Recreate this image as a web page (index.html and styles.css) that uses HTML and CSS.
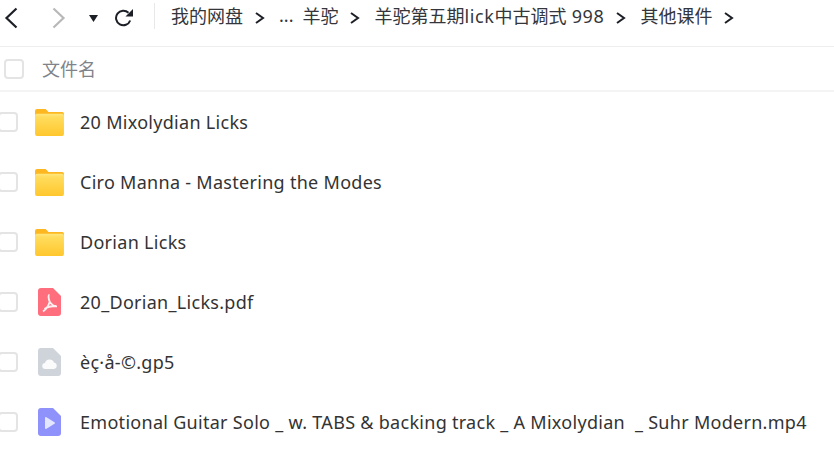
FILE: index.html
```html
<!DOCTYPE html>
<html lang="zh-CN">
<head>
    <meta charset="UTF-8">
    <title>其他课件</title>
    <link rel="stylesheet" href="styles.css">
</head>
<body>
    <div class="toolbar">
        <svg class="nav-back" width="14" height="22" viewBox="0 0 14 22"><path d="M12.500 1.500 2.500 11l10 9.500" fill="none" stroke="#1c1f26" stroke-width="2.200"/></svg>
        <svg class="nav-next" width="14" height="22" viewBox="0 0 14 22"><path d="M1.500 1.500 11.500 11l-10 9.500" fill="none" stroke="#b8b8b8" stroke-width="2.200"/></svg>
        <svg class="nav-drop" width="9" height="7" viewBox="0 0 9 7"><path d="M0 0h9L4.500 7z" fill="#1c1f26"/></svg>
        <svg class="nav-refresh" width="19" height="18" viewBox="0 0 19 18"><path d="M15.200 11.500A7.300 7.300 0 1 1 13.500 3.800" fill="none" stroke="#1c1f26" stroke-width="2"/><path d="M18 0v7.500h-7.500z" fill="#1c1f26"/></svg>
        <div class="divider"></div>
        <div class="crumbs">
            <span class="crumb">我的网盘</span><svg class="sep" width="10" height="12" viewBox="0 0 10 12"><path d="M1 1l7 5-7 5" fill="none" stroke="#1c1f26" stroke-width="2"/></svg>
            <span class="crumb dots">...</span>
            <span class="crumb">羊驼</span><svg class="sep" width="10" height="12" viewBox="0 0 10 12"><path d="M1 1l7 5-7 5" fill="none" stroke="#1c1f26" stroke-width="2"/></svg>
            <span class="crumb">羊驼第五期<span class="latin">lick</span>中古调式<span class="latin"> 998</span></span><svg class="sep" width="10" height="12" viewBox="0 0 10 12"><path d="M1 1l7 5-7 5" fill="none" stroke="#1c1f26" stroke-width="2"/></svg>
            <span class="crumb">其他课件</span><svg class="sep" width="10" height="12" viewBox="0 0 10 12"><path d="M1 1l7 5-7 5" fill="none" stroke="#1c1f26" stroke-width="2"/></svg>
        </div>
    </div>

    <div class="list-head">
        <span class="check"></span>
        <span class="head-name">文件名</span>
    </div>

    <div class="row">
        <span class="check"></span>
        <svg class="icon" width="29" height="27" viewBox="0 0 30 28">
            <defs>
                <linearGradient id="folderBody" x1="0" y1="0" x2="0" y2="1">
                    <stop offset="0" stop-color="#ffe680"/>
                    <stop offset="0.15" stop-color="#ffdc5c"/>
                    <stop offset="1" stop-color="#ffc72e"/>
                </linearGradient>
            </defs>
            <path d="M2 0h9l3 3h14a2 2 0 0 1 2 2v4H0V2a2 2 0 0 1 2-2z" fill="#fdb721"/>
            <path d="M2 5h26a2 2 0 0 1 2 2v19a2 2 0 0 1-2 2H2a2 2 0 0 1-2-2V7a2 2 0 0 1 2-2z" fill="url(#folderBody)"/>
        </svg>
        <span class="name">20 Mixolydian Licks</span>
    </div>
    <div class="row">
        <span class="check"></span>
        <svg class="icon" width="29" height="27" viewBox="0 0 30 28"><path d="M2 0h9l3 3h14a2 2 0 0 1 2 2v4H0V2a2 2 0 0 1 2-2z" fill="#fdb721"/><path d="M2 5h26a2 2 0 0 1 2 2v19a2 2 0 0 1-2 2H2a2 2 0 0 1-2-2V7a2 2 0 0 1 2-2z" fill="url(#folderBody)"/></svg>
        <span class="name">Ciro Manna - Mastering the Modes</span>
    </div>
    <div class="row">
        <span class="check"></span>
        <svg class="icon" width="29" height="27" viewBox="0 0 30 28"><path d="M2 0h9l3 3h14a2 2 0 0 1 2 2v4H0V2a2 2 0 0 1 2-2z" fill="#fdb721"/><path d="M2 5h26a2 2 0 0 1 2 2v19a2 2 0 0 1-2 2H2a2 2 0 0 1-2-2V7a2 2 0 0 1 2-2z" fill="url(#folderBody)"/></svg>
        <span class="name">Dorian Licks</span>
    </div>
    <div class="row">
        <span class="check"></span>
        <svg class="icon file" width="23" height="28" viewBox="0 0 23 28">
            <path d="M3 0h12l8 8v17a3 3 0 0 1-3 3H3a3 3 0 0 1-3-3V3a3 3 0 0 1 3-3z" fill="#ff6e7c"/>
            <path d="M11.500 7C10 7 10.500 11 11.700 13.700 10.500 17.500 8 21.500 5 23.500M11.700 13.700C13.500 16.500 16.500 18.300 19 18.300M6.500 21C9 19 14 18 18 18" fill="none" stroke="#fff" stroke-width="1.800" stroke-opacity="0.9"/>
        </svg>
        <span class="name">20_Dorian_Licks.pdf</span>
    </div>
    <div class="row">
        <span class="check"></span>
        <svg class="icon file" width="23" height="28" viewBox="0 0 23 28"><path d="M3 0h12l8 8v17a3 3 0 0 1-3 3H3a3 3 0 0 1-3-3V3a3 3 0 0 1 3-3z" fill="#cfd3da"/><path d="M7.500 21a3 3 0 0 1-.5-6 4.700 4.700 0 0 1 9-.5 3.300 3.300 0 0 1 0 6.500z" fill="#fff" fill-opacity="0.9"/></svg>
        <span class="name">èç·å-©.gp5</span>
    </div>
    <div class="row">
        <span class="check"></span>
        <svg class="icon file" width="23" height="28" viewBox="0 0 23 28"><path d="M3 0h12l8 8v17a3 3 0 0 1-3 3H3a3 3 0 0 1-3-3V3a3 3 0 0 1 3-3z" fill="#8f92fb"/><path d="M7 10a1 1 0 0 1 1.500-.8l8 5a1 1 0 0 1 0 1.600l-8 5a1 1 0 0 1-1.500-.8z" fill="#e4e5ff"/></svg>
        <span class="name">Emotional Guitar Solo _ w. TABS &amp; backing track _ A Mixolydian&nbsp; _ Suhr Modern.mp4</span>
    </div>
</body>
</html>
```

FILE: styles.css
```css
html, body {
    margin: 0;
    padding: 0;
    overflow: hidden;
}

body {
    font-family: "Noto Sans", "Noto Sans CJK SC", sans-serif;
    background-color: #ffffff;
    color: #333333;
}

/* top bar */
.toolbar {
    display: flex;
    align-items: center;
    height: 26px;
    padding: 3px 0 17px;
    border-bottom: 1px solid #eeeeee;
}

.toolbar svg {
    flex: none;
    margin-top: 4px;
}

.toolbar .nav-back {
    margin-left: 4px;
}

.toolbar .nav-next {
    margin-left: 34px;
}

.toolbar .nav-drop {
    margin-left: 23px;
}

.toolbar .nav-refresh {
    margin-left: 17px;
}

.divider {
    width: 1px;
    height: 26px;
    margin-left: 20px;
    background: #e8e8e8;
}

.crumbs {
    display: flex;
    align-items: center;
    margin-left: 16px;
    font-size: 18px;
    white-space: nowrap;
}

.crumb {
    margin-bottom: 3px;
    color: #34363b;
    white-space: pre;
}

.latin {
    letter-spacing: 0.6px;
}

.dots {
    margin-right: 9px;
}

.toolbar .sep {
    margin-left: 12px;
    margin-right: 14px;
}

/* list */
.list-head {
    display: flex;
    align-items: center;
    height: 43px;
    border-bottom: 2px solid #f4f4f4;
    padding-left: 4px;
}

.head-name {
    margin-left: 18px;
    margin-bottom: 2px;
    font-size: 18px;
    color: #80838a;
}

.check {
    flex: none;
    width: 16px;
    height: 16px;
    border: 2px solid #e4e4e4;
    border-radius: 4px;
}

.row {
    display: flex;
    align-items: center;
    height: 60px;
    margin-left: -2px;
}

.icon {
    flex: none;
    margin-left: 17px;
}

.icon.file {
    margin-left: 20px;
    margin-right: 3px;
}

.name {
    margin-left: 16px;
    font-size: 18px;
    letter-spacing: 0.29px;
    white-space: nowrap;
}
```
